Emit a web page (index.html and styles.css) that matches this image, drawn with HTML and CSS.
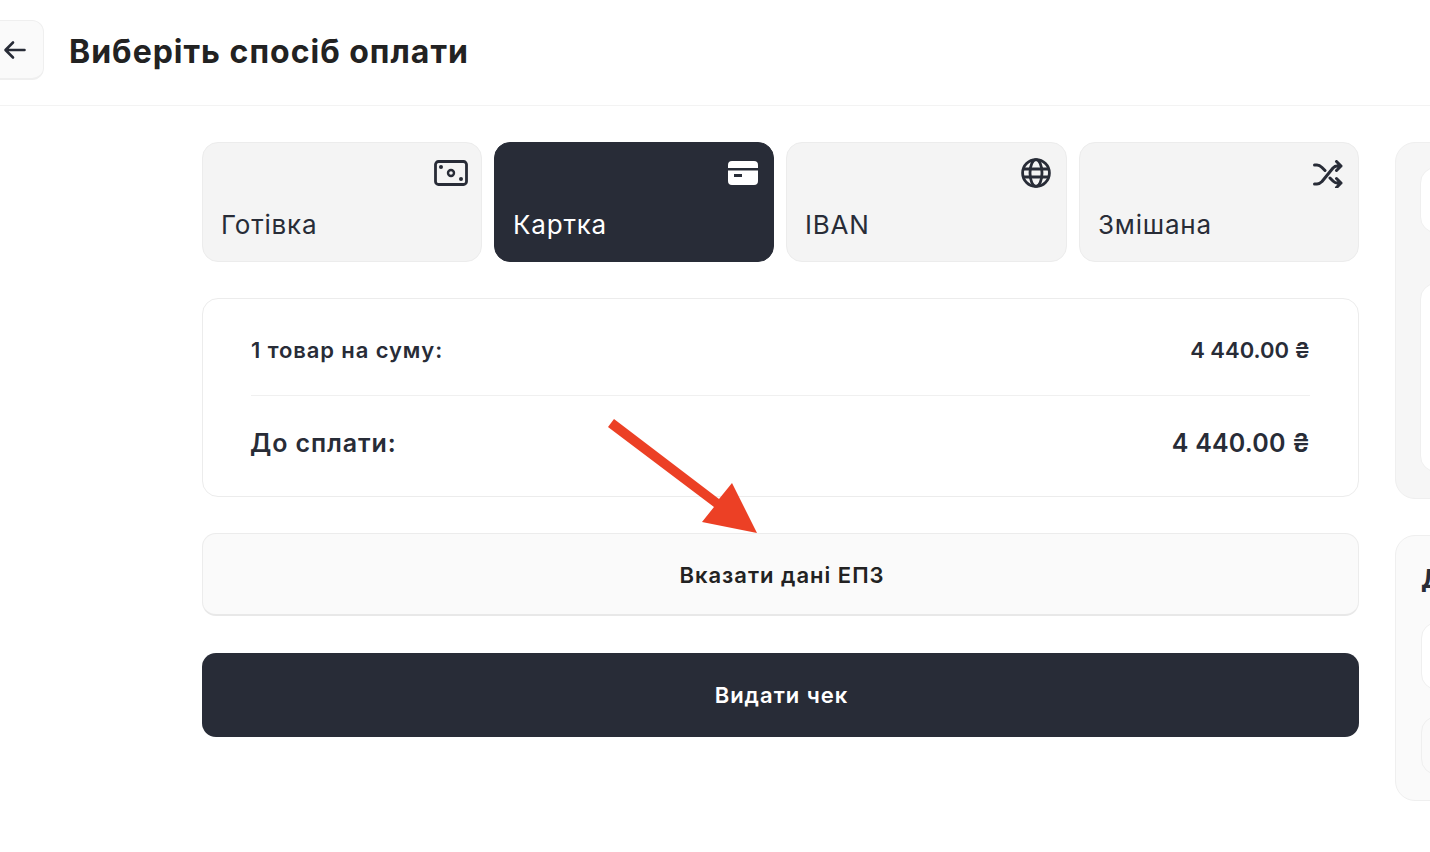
FILE: index.html
```html
<!DOCTYPE html>
<html lang="uk">
<head>
<meta charset="utf-8">
<title>Виберіть спосіб оплати</title>
<link rel="stylesheet" href="styles.css">
</head>
<body>
<header class="topbar">
  <button class="back" aria-label="Назад">
    <svg width="24" height="24" viewBox="0 0 24 24" fill="none" stroke="#282c37" stroke-width="2.600" stroke-linecap="round" stroke-linejoin="round"><path d="M22.500 12H4M11 4.500 3.500 12l7.500 7.500"/></svg>
  </button>
  <h1 class="title">Виберіть спосіб оплати</h1>
</header>
<main class="content">
  <section class="left">
    <div class="methods">
      <div class="method">
        <svg class="micon micon-cash" width="34" height="26" viewBox="0 0 34 26" fill="none"><rect x="1.500" y="1.500" width="31" height="23" rx="3" stroke="#282c37" stroke-width="2.800"/><circle cx="17" cy="13" r="3" stroke="#282c37" stroke-width="2.400"/><circle cx="7" cy="7" r="2" fill="#282c37"/><circle cx="27" cy="19" r="2" fill="#282c37"/></svg>
        <span class="mlabel">Готівка</span>
      </div>
      <div class="method active">
        <svg class="micon micon-card" width="30" height="24" viewBox="0 0 30 24"><path fill="#fff" fill-rule="evenodd" d="M0 4a4 4 0 0 1 4-4h22a4 4 0 0 1 4 4v3H0zM0 9.500h30V20a4 4 0 0 1-4 4H4a4 4 0 0 1-4-4zm6 3.500v3h8v-3z"/></svg>
        <span class="mlabel">Картка</span>
      </div>
      <div class="method">
        <svg class="micon micon-globe" width="30" height="30" viewBox="0 0 30 30" fill="none" stroke="#282c37" stroke-width="2.800"><circle cx="15" cy="15" r="13.400"/><ellipse cx="15" cy="15" rx="6" ry="13.400"/><path d="M2 11h26M2 19h26"/></svg>
        <span class="mlabel">IBAN</span>
      </div>
      <div class="method">
        <svg class="micon micon-mix" width="30" height="28" viewBox="0 0 30 28" fill="none" stroke="#282c37" stroke-width="3" stroke-linecap="round" stroke-linejoin="round"><path d="M1.500 5h2.500c2 0 3.500 1 5 2.500l3 3M1.500 24h2.500c2 0 3.500-1 5-2.500L20 8c1.500-1.500 2.500-2 4-2h4M23.500 1.500 28 6l-4.500 4.500M17 18l3 3c1.500 1.500 2.500 2 4 2h4M23.500 18.500 28 23l-4.500 4.500"/></svg>
        <span class="mlabel">Змішана</span>
      </div>
    </div>
    <div class="summary">
      <div class="row row-small"><span class="rlabel">1 товар на суму:</span><span>4 440.00 ₴</span></div>
      <div class="row row-large"><span class="rlabel rlabel-large">До сплати:</span><span class="amount-large">4 440.00 ₴</span></div>
    </div>
    <button class="btn btn-light">Вказати дані ЕПЗ</button>
    <button class="btn btn-dark">Видати чек</button>
  </section>
  <aside class="right">
    <div class="panel panel-top">
      <div class="inner inner-a"></div>
      <div class="inner inner-b"></div>
    </div>
    <div class="panel panel-bottom">
      <h2 class="panel-title">Д</h2>
      <div class="inner inner-c"></div>
      <div class="inner inner-d"></div>
    </div>
  </aside>
</main>
<svg class="arrow" width="160" height="125" viewBox="0 0 160 125"><path fill="#ec4025" d="M7 17 13 9 118 89 131 73 156 123 101 112 113 97z"/></svg>
</body>
</html>
```
FILE: styles.css
```css
* { box-sizing: border-box; }
html, body { margin: 0; height: 852px; overflow: hidden; background: #fff; }
body { position: relative; font-family: Inter, "Noto Sans", sans-serif; color: #282c37; }
.topbar { height: 106px; display: flex; align-items: center; gap: 25px; padding-bottom: 6px; border-bottom: 1px solid #f3f3f3; }
.back { width: 60px; height: 60px; margin-left: -16px; padding: 2px 0 0 17px; display: flex; align-items: center; justify-content: flex-start; background: #fafafa; border: 1px solid #efefef; border-bottom-width: 2px; border-radius: 12px; }
.title { margin: 5px 0 0; font-size: 32px; font-weight: 700; line-height: 36px; color: #222; letter-spacing: 1px; }
.content { display: flex; gap: 36px; padding: 36px 0 0 202px; }
.left { width: 1157px; flex: none; display: flex; flex-direction: column; }
.methods { display: grid; grid-template-columns: 280px 280px 281px 280px; gap: 12px; }
.method { height: 120px; position: relative; padding: 0 18px 20px; display: flex; align-items: flex-end; background: #f4f4f4; border: 1px solid #ececec; border-radius: 16px; }
.method.active { background: #282c37; border-color: #282c37; color: #fff; }
.micon { position: absolute; }
.micon-cash { top: 17px; right: 13px; }
.micon-card { top: 18px; right: 15px; }
.micon-globe { top: 15px; right: 15px; }
.micon-mix { top: 17px; right: 15px; }
.mlabel { font-size: 26px; line-height: 32px; font-weight: 400; letter-spacing: 0.800px; }
.summary { margin-top: 36px; height: 199px; padding: 0 48px; background: #fff; border: 1px solid #ececec; border-radius: 16px; display: flex; flex-direction: column; }
.row { display: flex; justify-content: space-between; align-items: center; font-weight: 600; }
.rlabel { letter-spacing: 0.900px; }
.rlabel-large { margin-left: -1px; }
.row-small { height: 97px; padding-top: 6px; font-size: 22px; border-bottom: 1px solid #f0f0f0; }
.row-large { flex: 1; padding-bottom: 6px; font-size: 25px; }
.amount-large { letter-spacing: 0.200px; }
.btn { display: block; width: 100%; border-radius: 14px; font-family: inherit; font-weight: 600; font-size: 22px; letter-spacing: 1px; }
.btn-light { margin-top: 36px; height: 83px; padding: 1px 0 0 3px; background: #fafafa; border: 1px solid #ececec; border-bottom: 2px solid #e8e8e8; color: #222; }
.btn-dark { margin-top: 37px; height: 84px; padding: 0 0 0 2px; background: #282c37; border: 0; color: #fff; }
.right { width: 460px; flex: none; display: flex; flex-direction: column; }
.panel { background: #fafafa; border: 1px solid #efefef; border-radius: 20px; padding-left: 24px; }
.panel-top { height: 357px; padding-top: 24px; background: #f6f6f6; }
.panel-bottom { margin-top: 36px; height: 266px; padding-top: 26px; padding-left: 25px; }
.panel-title { margin: 0; height: 33px; font-size: 26px; line-height: 33px; font-weight: 700; color: #282c37; }
.inner { background: #fff; border: 1px solid #efefef; border-radius: 16px; }
.inner-a { height: 66px; }
.inner-b { height: 189px; margin-top: 50px; }
.inner-c { height: 68px; margin-top: 27px; }
.inner-d { height: 59px; margin-top: 26px; background: #fafafa; }
.arrow { position: absolute; left: 601px; top: 410px; }
```
